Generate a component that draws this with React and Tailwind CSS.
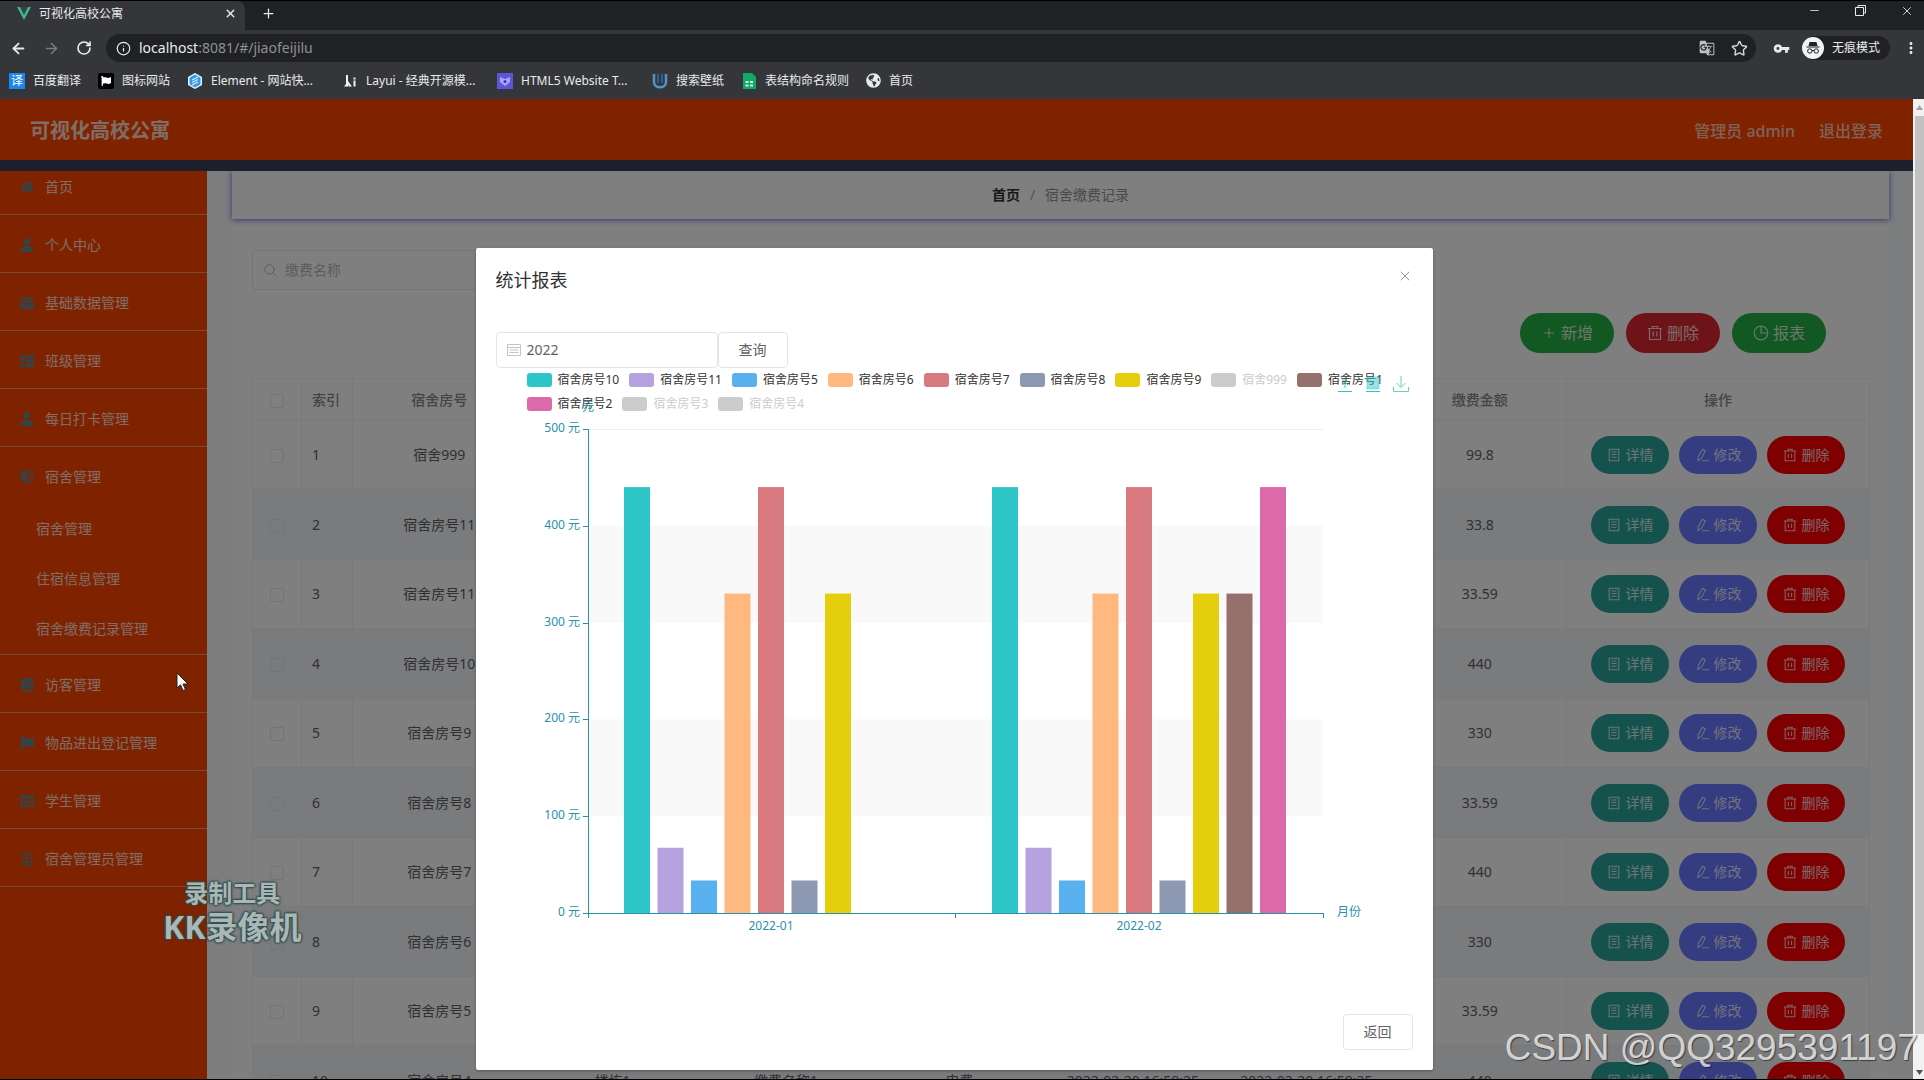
import React, { useState } from 'react';
import { ArrowLeft, ArrowRight, RotateCw, Info, Star, X, Plus, Minus, Search } from 'lucide-react';
import {
  FaHome,
  FaUser,
  FaBriefcase,
  FaThList,
  FaShieldAlt,
  FaBook,
  FaFlag,
  FaTable,
  FaRegIdBadge,
  FaGlobeAmericas,
} from 'react-icons/fa';
import { MdGTranslate, MdVpnKey, MdMoreVert } from 'react-icons/md';

const COLORS = {
  teal: '#2ec7c9',
  purple: '#b6a2de',
  blue: '#5ab1ef',
  orange: '#ffb980',
  red: '#d87a80',
  slate: '#8d98b3',
  yellow: '#e5cf0d',
  brown: '#95706d',
  pink: '#dc69aa',
  off: '#cccccc',
};

const legendRows = [
  [
    { name: '宿舍房号10', color: COLORS.teal },
    { name: '宿舍房号11', color: COLORS.purple },
    { name: '宿舍房号5', color: COLORS.blue },
    { name: '宿舍房号6', color: COLORS.orange },
    { name: '宿舍房号7', color: COLORS.red },
    { name: '宿舍房号8', color: COLORS.slate },
    { name: '宿舍房号9', color: COLORS.yellow },
    { name: '宿舍999', color: COLORS.off, off: true },
    { name: '宿舍房号1', color: COLORS.brown },
  ],
  [
    { name: '宿舍房号2', color: COLORS.pink },
    { name: '宿舍房号3', color: COLORS.off, off: true },
    { name: '宿舍房号4', color: COLORS.off, off: true },
  ],
];

const series = [
  { color: COLORS.teal, data: [440, 440] },
  { color: COLORS.purple, data: [67.4, 67.4] },
  { color: COLORS.blue, data: [33.59, 33.59] },
  { color: COLORS.orange, data: [330, 330] },
  { color: COLORS.red, data: [440, 440] },
  { color: COLORS.slate, data: [33.59, 33.59] },
  { color: COLORS.yellow, data: [330, 330] },
  { color: COLORS.brown, data: [0, 330] },
  { color: COLORS.pink, data: [0, 440] },
];

const rows = [
  ['宿舍999', '99.8'],
  ['宿舍房号11', '33.8'],
  ['宿舍房号11', '33.59'],
  ['宿舍房号10', '440'],
  ['宿舍房号9', '330'],
  ['宿舍房号8', '33.59'],
  ['宿舍房号7', '440'],
  ['宿舍房号6', '330'],
  ['宿舍房号5', '33.59'],
  ['宿舍房号4', '440'],
];

const menu = [
  { label: '首页', icon: FaHome },
  { label: '个人中心', icon: FaUser, arrow: true },
  { label: '基础数据管理', icon: FaBriefcase, arrow: true },
  { label: '班级管理', icon: FaThList, arrow: true },
  { label: '每日打卡管理', icon: FaUser, arrow: true },
  { label: '宿舍管理', icon: FaShieldAlt, arrow: true, children: ['宿舍管理', '住宿信息管理', '宿舍缴费记录管理'] },
  { label: '访客管理', icon: FaBook, arrow: true },
  { label: '物品进出登记管理', icon: FaFlag, arrow: true },
  { label: '学生管理', icon: FaTable, arrow: true },
  { label: '宿舍管理员管理', icon: FaRegIdBadge, arrow: true },
];

const IconBase = ({ size = 14, children }) => (
  <svg width={size} height={size} viewBox="0 0 16 16" fill="none" stroke="currentColor" strokeWidth="1.2">
    {children}
  </svg>
);

const DeleteIcon = ({ size }) => (
  <IconBase size={size}>
    <path d="M1 3.5h14M5.5 3.5v-2h5v2M2.5 3.5v11h11v-11M6.2 6.5v5M9.8 6.5v5" />
  </IconBase>
);

const DocIcon = () => (
  <IconBase>
    <path d="M2.5 1.5h11v13h-11zM5 4.5h6M5 7.5h6M5 10.5h6" />
  </IconBase>
);

const EditIcon = () => (
  <IconBase>
    <path d="M8.5 1.5l3.4 2-4.6 8.4-4 2.300.5-4.500zM8 14.500h8" />
  </IconBase>
);

const PieIcon = ({ size }) => (
  <IconBase size={size}>
    <circle cx="8" cy="8" r="6.8" />
    <path d="M8 1.2V8h6.8" />
  </IconBase>
);

const DateIcon = () => (
  <svg width="14" height="14" viewBox="0 0 14 14" fill="none" stroke="#c0c4cc">
    <path d="M.5 1.500h13v11H.5zM.5 4.500h13M2.500 7h9M2.500 9.500h9" />
  </svg>
);

const Bookmark = ({ icon, label, wide }) => (
  <a href="#/" className={wide ? 'flex w-[138px] items-center gap-2' : 'flex items-center gap-2'}>
    {icon}
    <span className="whitespace-nowrap text-xs text-[#e8eaed]">{label}</span>
  </a>
);

const BrowserBar = () => (
  <div className="shrink-0 bg-[#35363a] text-[#e8eaed]">
    {/* Tabs */}
    <div className="flex h-[29px] bg-[#202124]">
      <div className="flex w-[245px] items-center rounded-tr-lg bg-[#35363a] pb-1 pl-[17px] pr-2">
        <svg width="14" height="13" viewBox="0 0 14 13">
          <path d="M0 0h3l4 7.5L11 0h3L7 13z" fill="#41b883" />
          <path d="M3 0h2.5L7 3l1.5-3H11L7 7.5z" fill="#35495e" />
        </svg>
        <span className="ml-2 flex-1 text-xs">可视化高校公寓</span>
        <button type="button" aria-label="关闭标签页">
          <X size={13} strokeWidth={2.5} />
        </button>
      </div>
      <button type="button" aria-label="新标签页" className="ml-4 pb-1">
        <Plus size={15} />
      </button>
      <div className="ml-auto flex items-start gap-[33px] pr-[10px] pt-[3px]">
        <button type="button" aria-label="最小化">
          <Minus size={13} strokeWidth={1.5} />
        </button>
        <button type="button" aria-label="还原">
          <svg width="13" height="13" viewBox="0 0 13 13" fill="none" stroke="currentColor">
            <path d="M1.5 3.5h8v8h-8zM4 3.5v-2h7.500v7.500h-2" />
          </svg>
        </button>
        <button type="button" aria-label="关闭">
          <X size={14} strokeWidth={1.5} />
        </button>
      </div>
    </div>

    {/* Address row */}
    <div className="flex h-9 items-center pl-[10px] pr-1">
      <ArrowLeft size={17} strokeWidth={2.5} />
      <ArrowRight size={17} className="ml-4 text-[#7d7e82]" />
      <RotateCw size={16} strokeWidth={2.5} className="ml-4" />
      <div className="ml-[14px] flex h-7 flex-1 items-center rounded-full bg-[#202124] pl-[10px] pr-2">
        <Info size={15} />
        <div className="ml-2 flex-1 text-sm leading-5">
          localhost<span className="text-[#8f9195]">:8081/#/jiaofeijilu</span>
        </div>
        <MdGTranslate size={16} className="text-[#bdc1c6]" />
        <Star size={17} className="ml-4 text-[#d5d7da]" />
      </div>
      <MdVpnKey size={17} className="ml-[17px]" />
      <div className="ml-3 flex h-6 w-[88px] items-center rounded-full bg-[#202124]">
        <svg width="22" height="22" viewBox="0 0 22 22">
          <circle cx="11" cy="11" r="11" fill="#f1f3f4" />
          <path d="M7.5 5h7l1 4h-9zM4.5 9.5h13v1h-13z" fill="#202124" />
          <g fill="none" stroke="#202124">
            <circle cx="7.8" cy="14" r="2.2" />
            <circle cx="14.2" cy="14" r="2.2" />
            <path d="M10 13.5h2" />
          </g>
        </svg>
        <span className="ml-2 text-xs">无痕模式</span>
      </div>
      <MdMoreVert size={18} className="ml-3" />
    </div>

    {/* Bookmarks */}
    <div className="flex h-[33px] items-center gap-[17px] pb-1 pl-[9px]">
      <Bookmark
        label="百度翻译"
        icon={<span className="flex size-4 items-center justify-center bg-[#1c86f0] text-xs leading-4 text-white">译</span>}
      />
      <Bookmark
        label="图标网站"
        icon={
          <span className="flex size-4 items-center justify-center rounded-xs bg-black text-white">
            <FaFlag size={10} />
          </span>
        }
      />
      <Bookmark
        wide
        label="Element - 网站快..."
        icon={
          <svg width="16" height="16" viewBox="0 0 16 16">
            <path d="M8 0l7 4v8l-7 4-7-4V4z" fill="#e6f4ff" />
            <path d="M8 1.5l5.5 3.2v6.6L8 14.5l-5.500-3.200V4.700z" fill="#2f9bef" />
            <path d="M5 7l6-3M5 9.5l6-3M5 12l6-3" stroke="#fff" />
          </svg>
        }
      />
      <Bookmark
        wide
        label="Layui - 经典开源模..."
        icon={
          <svg width="16" height="16" viewBox="0 0 16 16" fill="#f1f1f1">
            <path d="M4 2h2v6l4 5.500H6.500L6 11v2.500H2L4 11zM11.500 7.500h2v6h-2zM11.500 4.500h2v2h-2z" />
          </svg>
        }
      />
      <Bookmark
        wide
        label="HTML5 Website T..."
        icon={
          <svg width="16" height="16" viewBox="0 0 16 16">
            <path d="M0 0h16v16H0z" fill="#5d55d8" />
            <path d="M3 4l5 2 5-2v5l-5 4-5-4z" fill="#a9a4f5" />
            <circle cx="8" cy="8.5" r="1.5" fill="#3c35b0" />
          </svg>
        }
      />
      <Bookmark
        label="搜索壁纸"
        icon={
          <svg width="16" height="16" viewBox="0 0 16 16" fill="none" strokeWidth="2.5">
            <path d="M2 1v8c0 7 12 7 12 0V1" stroke="#4f93c9" />
            <path d="M6 1v9M10 1v9" stroke="#2c5f94" strokeWidth="2" />
          </svg>
        }
      />
      <Bookmark
        label="表结构命名规则"
        icon={
          <svg width="16" height="16" viewBox="0 0 16 16">
            <path d="M2 0h9l4 4v12H2z" fill="#12a869" />
            <path d="M4.5 8h3v2h-3zM9 8h3v2H9zM4.5 11.5h3v2h-3zM9 11.5h3v2H9z" fill="#c8f3df" />
          </svg>
        }
      />
      <Bookmark label="首页" icon={<FaGlobeAmericas size={15} />} />
    </div>
  </div>
);

const Sidebar = () => (
  <nav className="w-[207px] shrink-0 overflow-hidden bg-[#ff4500] text-sm text-white/80">
    {/* scrolled a little, the first item is cut off */}
    <ul className="-mt-[14px]">
      {menu.map(({ label, icon: Icon, arrow, children }) => (
        <li key={label} className="border-b border-white/40">
          <a href="#/" className="flex h-[57px] items-center pl-5 pr-6 pt-0.5">
            <Icon size={14} className="text-[#6d8688]" />
            <span className="ml-[11px] flex-1">{label}</span>
            {arrow && (
              <svg width="10" height="6" viewBox="0 0 10 6" fill="none" stroke="#c05020" strokeOpacity=".3">
                <path d="M1 1l4 4 4-4" />
              </svg>
            )}
          </a>
          {children && (
            <ul>
              {children.map((child) => (
                <li key={child}>
                  <a href="#/" className="flex h-[50px] items-center pl-9">
                    {child}
                  </a>
                </li>
              ))}
            </ul>
          )}
        </li>
      ))}
    </ul>
  </nav>
);

const ToolButton = ({ className, children }) => (
  <button type="button" className={`flex h-10 w-[94px] items-center justify-center gap-1 rounded-full text-base text-white/80 ${className}`}>
    {children}
  </button>
);

const RowButton = ({ className, children }) => (
  <button type="button" className={`flex h-[38px] w-[78px] items-center justify-center gap-[5px] rounded-full text-white/80 ${className}`}>
    {children}
  </button>
);

const FeeTable = () => (
  <table className="mt-[25px] w-full table-fixed border-l border-t border-[#f0f2f6] text-center text-sm text-[#606266]">
    <colgroup>
      <col className="w-[49px]" />
      <col className="w-[51px]" />
      <col span={7} />
      <col className="w-[303px]" />
    </colgroup>
    <thead>
      <tr className="h-[42px] text-[#85888e] [&>th]:border-b [&>th]:border-r [&>th]:border-[#f0f2f6] [&>th]:font-medium">
        <th>
          <input type="checkbox" aria-label="全选" className="size-[14px] appearance-none rounded-xs border border-[#e6e9ee] align-middle" />
        </th>
        <th className="pl-[10px] text-left">索引</th>
        <th>宿舍房号</th>
        <th>楼栋</th>
        <th>缴费名称</th>
        <th>缴费类型</th>
        <th>缴费时间</th>
        <th>录入时间</th>
        <th>缴费金额</th>
        <th>操作</th>
      </tr>
    </thead>
    <tbody>
      {rows.map(([room, amount], i) => (
        <tr
          key={i}
          className="odd:h-[69px] even:h-[70px] even:bg-[#f5f7fa] [&>td]:border-b [&>td]:border-r [&>td]:border-[#f0f2f6]"
        >
          <td>
            <input type="checkbox" aria-label={`选择 ${i + 1}`} className="size-[14px] appearance-none rounded-xs border border-[#e6e9ee] align-middle" />
          </td>
          <td className="pl-[10px] text-left">{i + 1}</td>
          <td>{room}</td>
          <td>楼栋1</td>
          <td>缴费名称1</td>
          <td>电费</td>
          <td>2022-02-20 16:59:25</td>
          <td>2022-02-20 16:59:25</td>
          <td>{amount}</td>
          <td>
            <div className="flex justify-center gap-[10px]">
              <RowButton className="bg-[#2aa59d]">
                <DocIcon /> 详情
              </RowButton>
              <RowButton className="bg-[#6a78ff]">
                <EditIcon /> 修改
              </RowButton>
              <RowButton className="bg-[#ff0000]">
                <DeleteIcon /> 删除
              </RowButton>
            </div>
          </td>
        </tr>
      ))}
    </tbody>
  </table>
);

const AXIS = '#2792a8';
const LEFT = 92;
const RIGHT = 827;
const TOP = 61;
const BOTTOM = 545;
const y = (value) => BOTTOM - (value * (BOTTOM - TOP)) / 500;

const FeeChart = () => (
  <div className="relative h-[600px] text-xs">
    {/* Legend */}
    <div className="absolute left-[31px] top-[2px] space-y-1 text-[#333]">
      {legendRows.map((items, i) => (
        <ul key={i} className="flex gap-[10px]">
          {items.map(({ name, color, off }) => (
            <li key={name} className="flex h-5 items-center gap-[6px] whitespace-nowrap">
              <span className="h-[14px] w-[25px] rounded-[3px]" style={{ backgroundColor: color }} />
              <span className={off ? 'text-[#cccccc]' : ''}>{name}</span>
            </li>
          ))}
        </ul>
      ))}
    </div>

    <svg className="relative h-full w-full overflow-visible">
      {/* split areas */}
      <rect x={LEFT} y={y(400)} width={RIGHT - LEFT} height={y(300) - y(400)} fill="#f9f9f9" />
      <rect x={LEFT} y={y(200)} width={RIGHT - LEFT} height={y(100) - y(200)} fill="#f9f9f9" />
      <path d={`M${LEFT} ${TOP + 0.5}H${RIGHT}`} stroke="#eeeeee" />

      {/* bars */}
      {series.map(({ color, data }, s) =>
        data.map((value, m) => (
          <rect key={`${s}-${m}`} x={128 + m * 368 + s * 33.5} y={y(value)} width="26" height={BOTTOM - y(value)} fill={color} />
        ))
      )}

      {/* axes */}
      <g stroke={AXIS}>
        <path d={`M${LEFT + 0.5} ${TOP}V${BOTTOM}`} />
        <path d={`M${LEFT} ${BOTTOM + 0.5}H${RIGHT + 1}`} />
        {[0, 100, 200, 300, 400, 500].map((v) => (
          <path key={v} d={`M${LEFT - 5} ${Math.round(y(v)) + 0.5}h5`} />
        ))}
        {[LEFT, 459, RIGHT].map((x) => (
          <path key={x} d={`M${x + 0.5} ${BOTTOM}v5`} />
        ))}
      </g>
      <g fill={AXIS} fontSize="12">
        {[0, 100, 200, 300, 400, 500].map((v) => (
          <text key={v} x={LEFT - 8} y={y(v) + 3} textAnchor="end">
            {v} 元
          </text>
        ))}
        <text x={LEFT} y="43" textAnchor="middle">元</text>
        <text x="275" y="562" textAnchor="middle">2022-01</text>
        <text x="643" y="562" textAnchor="middle">2022-02</text>
        <text x="841" y="548">月份</text>
      </g>
    </svg>

    {/* Toolbox */}
    <div className="absolute right-1 top-2 flex gap-3">
      <svg width="16" height="16" viewBox="0 0 16 16" fill="none" stroke="#2ec7c9">
        <path d="M1 15.5h14M8 12V6M5 9l3-3 3 3M5 4h3" />
      </svg>
      <svg width="16" height="16" viewBox="0 0 16 16" fill="#2ec7c9" fillOpacity=".5" stroke="#2ec7c9">
        <path d="M2 1h12v12H2z" strokeOpacity=".4" />
        <path d="M1 15.5h14" />
      </svg>
      <svg width="16" height="16" viewBox="0 0 16 16" fill="none" stroke="#6bcfb8">
        <path d="M8 0v11M3.5 7L8 11.5 12.5 7M.5 11v4.500h15V11" />
      </svg>
    </div>
  </div>
);

const ReportDialog = ({ onClose }) => {
  const [year, setYear] = useState('2022');

  return (
    <div
      role="dialog"
      aria-label="统计报表"
      className="flex h-[822px] w-[957px] max-w-full flex-col rounded-xs bg-white p-5 text-sm text-[#606266] shadow-[0_1px_3px_rgba(0,0,0,0.3)]"
    >
      <div className="flex justify-between">
        <h2 className="text-lg leading-6 text-[#303133]">统计报表</h2>
        <button type="button" aria-label="关闭" onClick={onClose} className="size-4 text-[#909399]">
          <X size={16} strokeWidth={1.5} />
        </button>
      </div>

      <div className="mt-10 flex">
        <label className="flex h-9 w-[222px] items-center gap-[6px] rounded border border-[#e2e5ea] pl-[10px]">
          <DateIcon />
          <input
            aria-label="年份"
            value={year}
            onChange={(e) => setYear(e.target.value)}
            className="w-40 outline-none"
          />
        </label>
        <button type="button" className="h-9 w-[70px] rounded border border-[#e2e5ea]">
          查询
        </button>
      </div>

      <FeeChart />

      <div className="mt-auto flex justify-end">
        <button type="button" onClick={onClose} className="h-9 w-[70px] rounded border border-[#e2e5ea]">
          返回
        </button>
      </div>
    </div>
  );
};

const App = () => {
  const [open, setOpen] = useState(true);

  return (
    <div className="relative flex h-screen flex-col overflow-hidden border-y border-black font-['Noto_Sans','Noto_Sans_CJK_SC',sans-serif]">
      <BrowserBar />

      <div className="flex min-h-0 flex-1">
        <div className="relative flex min-w-0 flex-1 flex-col">
          {/* App header */}
          <header className="flex h-[61px] shrink-0 items-center bg-[#ff4500] pl-[30px] pr-[30px] pt-0.5 text-white/80">
            <h1 className="text-xl font-bold">可视化高校公寓</h1>
            <div className="ml-auto flex gap-6 text-base font-medium text-white/70">
              <span>管理员 admin</span>
              <a href="#/login">退出登录</a>
            </div>
          </header>
          <div className="h-[11px] shrink-0 bg-[#3c3f58]" />

          <div className="flex min-h-0 flex-1 overflow-hidden bg-[#f8fbfe]">
            <Sidebar />
            <main className="min-w-0 flex-1 pl-[25px] pr-6">
              <div className="relative flex h-12 items-center justify-center gap-[10px] bg-white text-sm shadow-[0_1px_6px_rgba(70,70,200,0.8)]">
                <a href="#/" className="font-bold text-[#303133]">首页</a>
                <span className="text-[#a0a4ac]">/</span>
                <span className="text-[#909399]">宿舍缴费记录</span>
              </div>

              <section className="bg-white pl-5 pr-[19px] pt-[31px]">
                <label className="flex h-10 w-60 items-center gap-2 rounded border border-[#e6e9ee] pl-[10px] text-sm">
                  <Search size={14} strokeWidth={1.5} className="text-[#b4b8be]" />
                  <input aria-label="缴费名称" placeholder="缴费名称" className="w-48 outline-none placeholder:text-[#b4b8be]" />
                </label>
                <div className="mt-[23px] flex justify-end gap-3 pr-11">
                  <ToolButton className="bg-[#24b044]">
                    <Plus size={16} strokeWidth={1.5} /> 新增
                  </ToolButton>
                  <ToolButton className="bg-[#dc2832]">
                    <DeleteIcon size={16} /> 删除
                  </ToolButton>
                  <ToolButton className="bg-[#24b044]">
                    <PieIcon size={16} /> 报表
                  </ToolButton>
                </div>
                <FeeTable />
              </section>
            </main>
          </div>

          {open && (
            <div className="absolute inset-0 flex items-start justify-center bg-black/50 pr-[5px] pt-[149px]">
              <ReportDialog onClose={() => setOpen(false)} />
            </div>
          )}
        </div>

        {/* Scrollbar */}
        <div className="flex w-[11px] shrink-0 flex-col items-center bg-[#f1f1f1] pl-[2px]">
          <svg className="my-[6px]" width="7" height="5" viewBox="0 0 7 5" fill="#a3a3a3">
            <path d="M0 5l3.5-5L7 5z" />
          </svg>
          <div className="w-full flex-1 bg-[#c1c1c1]" />
          <svg className="mb-1 mt-9" width="7" height="5" viewBox="0 0 7 5" fill="#505050">
            <path d="M0 0l3.5 5L7 0z" />
          </svg>
        </div>
      </div>

      {/* Mouse pointer */}
      <svg className="absolute left-[176px] top-[671px]" width="14" height="20" viewBox="0 0 14 20">
        <path d="M1 1v15l3.5-3.2L7 18.5l2.500-1-2.500-5.500h5z" fill="#fff" stroke="#222" />
      </svg>

      {/* Watermarks */}
      <div className="absolute left-[163px] top-[874px] text-center font-bold text-white/60 [text-shadow:1px_0_2px_#2f4f4c,-1px_0_2px_#2f4f4c,0_1px_2px_#2f4f4c,0_-1px_2px_#2f4f4c]">
        <p className="text-2xl leading-9">录制工具</p>
        <p className="text-[32px] leading-8">KK录像机</p>
      </div>
      <p className="absolute right-[6px] top-[1022px] whitespace-nowrap font-['Liberation_Sans',sans-serif] text-[37px] leading-[50px] text-white/75 [text-shadow:1px_1px_1px_rgba(0,0,0,0.5)]">
        CSDN @QQ3295391197
      </p>
    </div>
  );
};

export default App;
